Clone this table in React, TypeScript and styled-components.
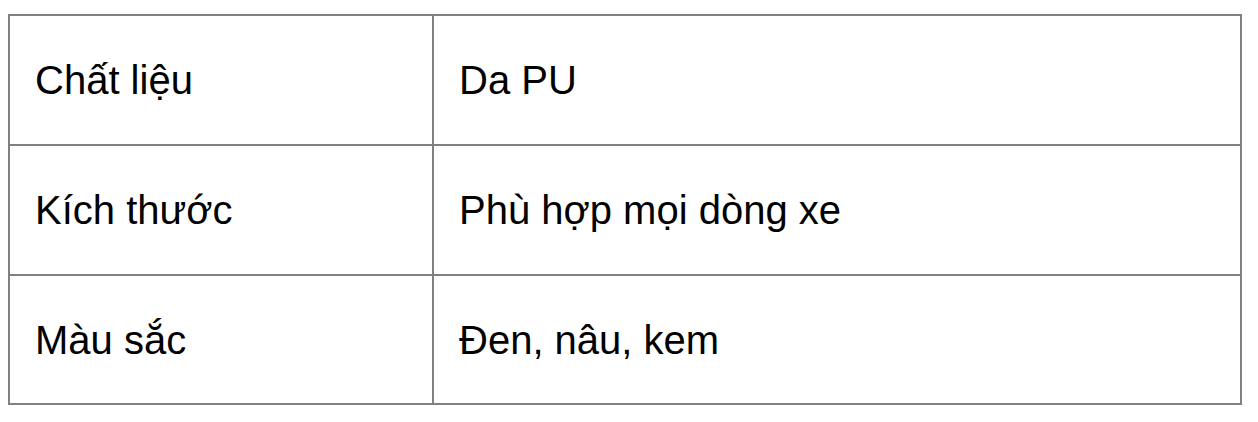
import React from "react";
import styled, { createGlobalStyle } from "styled-components";

const GlobalStyle = createGlobalStyle`
  html, body {
    margin: 0;
    padding: 0;
    background: #ffffff;
  }
  body {
    font-family: "Liberation Sans", Arial, sans-serif;
    color: #000000;
  }
`;

const Page = styled.div`
  padding: 14px 8px;
`;

const SpecTable = styled.div`
  width: 1234px;
  box-sizing: border-box;
  border: 2px solid #808080;
  display: grid;
  grid-template-columns: 424px 1fr;
`;

const Cell = styled.div<{ $first?: boolean; $last?: boolean }>`
  box-sizing: border-box;
  height: ${(p) => (p.$last ? "127px" : "130px")};
  border-bottom: ${(p) => (p.$last ? "none" : "2px solid #808080")};
  border-right: ${(p) => (p.$first ? "2px solid #808080" : "none")};
  display: flex;
  align-items: center;
  padding: 0 24px 0 25px;
  font-size: 40px;
  line-height: 1.15;
  color: #000;
`;

const rows = [
  ["Chất liệu", "Da PU"],
  ["Kích thước", "Phù hợp mọi dòng xe"],
  ["Màu sắc", "Đen, nâu, kem"],
];

export default function App() {
  return (
    <>
      <GlobalStyle />
      <Page>
        <SpecTable>
          {rows.map(([k, v], i) => (
            <React.Fragment key={k}>
              <Cell $first $last={i === rows.length - 1}>{k}</Cell>
              <Cell $last={i === rows.length - 1}>{v}</Cell>
            </React.Fragment>
          ))}
        </SpecTable>
      </Page>
    </>
  );
}
